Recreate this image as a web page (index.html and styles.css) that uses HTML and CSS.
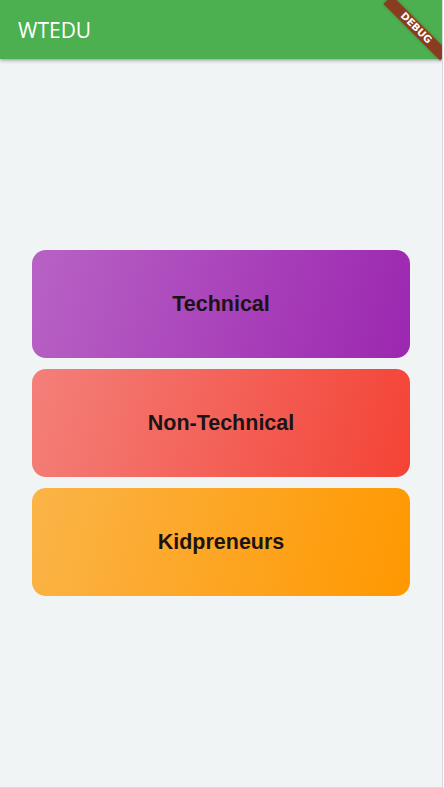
FILE: index.html
```html
<!DOCTYPE html>
<html>
<head>
<meta charset="utf-8">
<link rel="stylesheet" href="styles.css">
</head>
<body>
<div class="screen">
  <header class="appbar">
    <h1 class="title">WTEDU</h1>
  </header>
  <main class="content">
    <div class="card card-purple">Technical</div>
    <div class="card card-red">Non-Technical</div>
    <div class="card card-orange">Kidpreneurs</div>
  </main>
  <div class="banner">DEBUG</div>
</div>
</body>
</html>
```
FILE: styles.css
```css
html, body {
  margin: 0;
  padding: 0;
  background: #ffffff;
}
.screen {
  position: relative;
  box-sizing: border-box;
  width: 443px;
  height: 788px;
  background: #f0f4f5;
  border-right: 1px solid #d6d8d9;
  border-bottom: 1px solid #d6d8d9;
  display: flex;
  flex-direction: column;
  overflow: hidden;
}
.appbar {
  height: 59px;
  background: #4caf50;
  display: flex;
  align-items: center;
  padding-left: 18px;
  box-shadow: 0 2px 4px rgba(0,0,0,0.22), 0 1px 2px rgba(0,0,0,0.15);
  position: relative;
  z-index: 1;
  flex-shrink: 0;
}
.title {
  margin: 0;
  color: #ffffff;
  font-family: "Open Sans", sans-serif;
  font-weight: 400;
  font-size: 21px;
  letter-spacing: 0;
}
.content {
  flex: 1;
  display: flex;
  flex-direction: column;
  justify-content: center;
  padding: 0 32px;
  gap: 11.5px;
}
.card {
  height: 107.5px;
  border-radius: 14px;
  display: flex;
  align-items: center;
  justify-content: center;
  font-family: "Liberation Sans", Arial, sans-serif;
  font-weight: 700;
  font-size: 21.5px;
  color: #1b1416;
}
.card-purple {
  background: linear-gradient(105deg, #b862c5 0%, #9c27b0 100%);
}
.card-red {
  background: linear-gradient(105deg, #f3807a 0%, #f44336 100%);
}
.card-orange {
  background: linear-gradient(105deg, #fbb448 0%, #ff9800 100%);
}
.banner {
  position: absolute;
  left: 376px;
  top: 22px;
  width: 80px;
  height: 12px;
  transform: rotate(45deg);
  background: rgba(150, 34, 22, 0.82);
  color: #ffffff;
  font-family: "DejaVu Sans", sans-serif;
  font-weight: 900;
  font-size: 10px;
  line-height: 12px;
  text-align: center;
  z-index: 2;
  box-shadow: 0 0 3px rgba(0,0,0,0.25);
}
```
